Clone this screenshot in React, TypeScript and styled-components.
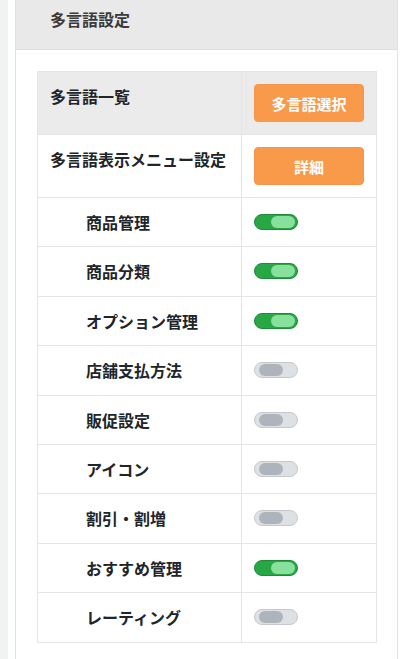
import React from "react";
import styled, { createGlobalStyle } from "styled-components";

const Global = createGlobalStyle`
  html, body { margin: 0; padding: 0; background: #fff; }
  body { font-family: "Noto Sans CJK JP", "Noto Sans", sans-serif; color: #212529; }
`;

const Page = styled.div`
  display: flex;
  min-height: 659px;
`;

const SideStrip = styled.div`
  width: 8px;
  flex: none;
  background: #f1f2f2;
`;

const Main = styled.div`
  flex: 1;
  padding: 0 2px 0 7px;
  display: flex;
`;

const Card = styled.section`
  flex: 1;
  border: 1px solid #e2e3e4;
  border-top: none;
  background: #fff;
`;

const CardHeader = styled.header`
  height: 50px;
  box-sizing: border-box;
  padding: 7px 0 0 34px;
  background: #e9e9e9;
  border-bottom: 1px solid #dcdddd;
  font-size: 16px;
  line-height: 24px;
  font-weight: 700;
  color: #3a3a3a;
`;

const CardBody = styled.div`
  padding: 21px 20px 21px 21px;
`;

const Table = styled.table`
  width: 340px;
  border-collapse: collapse;
  border: 1px solid #e3e6e9;
  font-size: 16px;
  line-height: 24px;
`;

const Row = styled.tr<{ $head?: boolean }>`
  background: ${(p) => (p.$head ? "#ebebeb" : "#fff")};
`;

const Label = styled.td<{ $sub?: boolean }>`
  width: 190px;
  border: 1px solid #e3e6e9;
  padding: 12px 12px ${(p) => (p.$sub ? "12.4px" : "12px")} ${(p) => (p.$sub ? "48px" : "12px")};
  vertical-align: top;
  font-weight: 700;
  color: #212529;
  white-space: nowrap;
`;

const Value = styled.td`
  border: 1px solid #e3e6e9;
  padding: 12px;
  vertical-align: top;
`;

const OrangeButton = styled.button`
  display: flex;
  align-items: center;
  justify-content: center;
  width: 110px;
  height: 38px;
  border: 1px solid #f7954a;
  border-radius: 4px;
  background: #f99a4b;
  color: #fff;
  font-family: inherit;
  font-size: 15px;
  font-weight: 700;
  padding: 0;
  cursor: pointer;
`;

const ToggleLine = styled.div`
  height: 24px;
  display: flex;
  align-items: center;
`;

const Track = styled.span<{ $on: boolean }>`
  position: relative;
  display: inline-block;
  box-sizing: border-box;
  width: 44px;
  height: 16px;
  border-radius: 8px;
  background: ${(p) => (p.$on ? "#28a745" : "#dee1e4")};
  border: 1px solid ${(p) => (p.$on ? "#1f8b3a" : "#c5c9cd")};
`;

const Knob = styled.span<{ $on: boolean }>`
  position: absolute;
  top: 1px;
  ${(p) => (p.$on ? "right: 2px;" : "left: 4px;")}
  width: 24px;
  height: 12px;
  border-radius: 6px;
  background: ${(p) => (p.$on ? "#87e19c" : "#adb4bc")};
`;

const Toggle = ({ on }: { on: boolean }) => (
  <ToggleLine>
    <Track $on={on}>
      <Knob $on={on} />
    </Track>
  </ToggleLine>
);

const items: { label: string; on: boolean }[] = [
  { label: "商品管理", on: true },
  { label: "商品分類", on: true },
  { label: "オプション管理", on: true },
  { label: "店舗支払方法", on: false },
  { label: "販促設定", on: false },
  { label: "アイコン", on: false },
  { label: "割引・割増", on: false },
  { label: "おすすめ管理", on: true },
  { label: "レーティング", on: false },
];

export default function App() {
  return (
    <>
      <Global />
      <Page>
        <SideStrip />
        <Main>
          <Card>
            <CardHeader>多言語設定</CardHeader>
            <CardBody>
              <Table>
                <tbody>
                  <Row $head>
                    <Label>多言語一覧</Label>
                    <Value>
                      <OrangeButton>多言語選択</OrangeButton>
                    </Value>
                  </Row>
                  <Row>
                    <Label>多言語表示メニュー設定</Label>
                    <Value>
                      <OrangeButton>詳細</OrangeButton>
                    </Value>
                  </Row>
                  {items.map((it) => (
                    <Row key={it.label}>
                      <Label $sub>{it.label}</Label>
                      <Value>
                        <Toggle on={it.on} />
                      </Value>
                    </Row>
                  ))}
                </tbody>
              </Table>
            </CardBody>
          </Card>
        </Main>
      </Page>
    </>
  );
}
